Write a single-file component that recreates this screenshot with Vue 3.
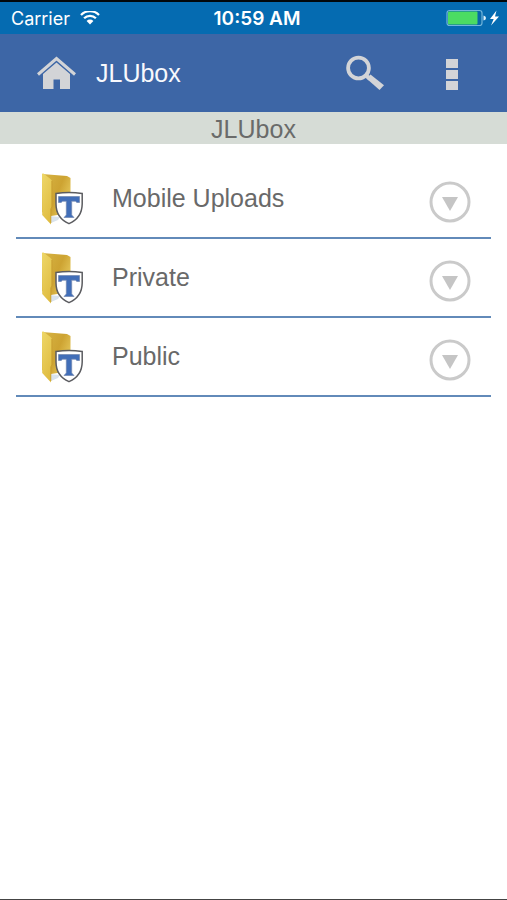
<script setup>
const folders = ['Mobile Uploads', 'Private', 'Public']
</script>

<template>
  <div class="screen">
    <div class="status">
      <div class="carrier">
        <span>Carrier</span>
        <svg width="20" height="15" viewBox="0 0 20 15" aria-hidden="true">
          <g fill="none" stroke="#fff" stroke-width="2.3">
            <path d="M1 4A12.6 12.6 0 0 1 19 4" />
            <path d="M4.1 7.3A8.3 8.3 0 0 1 15.9 7.3" />
          </g>
          <path d="M6.6 10A4.8 4.8 0 0 1 13.4 10L10 13.5Z" fill="#fff" />
        </svg>
      </div>
      <div class="time">10:59 AM</div>
      <div class="power">
        <svg width="54" height="18" viewBox="0 0 54 18" aria-hidden="true">
          <rect x="2" y="1.5" width="35" height="15" rx="2.5" fill="#0768a8" stroke="#72b5db" stroke-width="1.2" />
          <rect x="3" y="2.5" width="29.5" height="13" rx="1" fill="#4bdc62" />
          <path d="M38.5 6.5Q41 7 41 9T38.5 11.5Z" fill="#dff1fa" />
          <path d="M51.5 1.5L45 10H48.7L46 16.5L54 7.5H50Z" fill="#fff" />
        </svg>
      </div>
    </div>

    <header class="bar">
      <button class="icon-button" type="button" aria-label="Home">
        <svg width="40" height="34" viewBox="0 0 40 34" aria-hidden="true">
          <path d="M2 18.5L20.5 2.5L39 18.5" fill="none" stroke="#d3d4d7" stroke-width="3" />
          <path d="M20.5 6.4L34 18V33H24V23.5H17.5V33H7V18Z" fill="#d3d4d7" />
        </svg>
      </button>
      <h1>JLUbox</h1>
      <button class="icon-button search" type="button" aria-label="Search">
        <svg width="40" height="36" viewBox="0 0 40 36" aria-hidden="true">
          <circle cx="13.5" cy="13" r="10.4" fill="none" stroke="#d3d4d7" stroke-width="3.8" />
          <path d="M19.5 19L25 24" stroke="#d3d4d7" stroke-width="4" />
          <path d="M25.5 19.5L39 30.2L34.5 35L21.5 23.5Z" fill="#d3d4d7" />
        </svg>
      </button>
      <button class="icon-button" type="button" aria-label="More options">
        <svg width="12" height="34" viewBox="0 0 12 34" aria-hidden="true">
          <path d="M0 3H12V12H0ZM0 14H12V23H0ZM0 25H12V34H0Z" fill="#d3d4d7" />
        </svg>
      </button>
    </header>

    <h2>JLUbox</h2>

    <ul class="list">
      <li v-for="name in folders" :key="name">
        <a class="folder" href="#">
          <svg width="42" height="52" viewBox="0 0 42 52" aria-hidden="true">
            <defs>
              <linearGradient id="folder-back" x1="0" y1="0" x2="1" y2=".6">
                <stop offset="0" stop-color="#d7b545" />
                <stop offset=".6" stop-color="#cda332" />
                <stop offset="1" stop-color="#e6c95c" />
              </linearGradient>
              <linearGradient id="folder-front" x1="0" y1="0" x2=".5" y2="1">
                <stop offset="0" stop-color="#eed768" />
                <stop offset="1" stop-color="#e0bd42" />
              </linearGradient>
            </defs>
            <path d="M8 43L19 44L17 47L10 50Z" fill="#d9e3ec" />
            <path d="M1 1L26 3L29.5 5V40L10 43L1 39Z" fill="url(#folder-back)" />
            <path d="M1 1Q1 0 2.5 .6L9.5 6Q11 7 11 9V34L10 36V51.5L1.2 42Z" fill="url(#folder-front)" />
            <path d="M10.8 8V34L9.8 36V50" fill="none" stroke="#c59b2d" stroke-width=".8" />
            <path d="M15 20.5Q28 18.5 41.2 20.5V31Q41 45 28 50.6Q15 45 15 31Z" fill="#fff" stroke="#5b5c60" stroke-width="1.5" />
            <path d="M17.5 23.5H38.5V29.5H35.7L34.7 28.2H30.7V42L33 44.5H23L25.3 42V28.2H21.3L20.3 29.5H17.5Z" fill="#416eb8" stroke="#7187af" stroke-width=".7" />
          </svg>
          <span>{{ name }}</span>
        </a>
        <button class="icon-button" type="button" :aria-label="`Actions for ${name}`">
          <svg width="42" height="42" viewBox="0 0 42 42" aria-hidden="true">
            <circle cx="21" cy="21" r="19" fill="none" stroke="#cacaca" stroke-width="3" />
            <path d="M13 16H29L21 30Z" fill="#c5c5c5" />
          </svg>
        </button>
      </li>
    </ul>
  </div>
</template>

<style>
body {
  margin: 0;
  background: #fff;
}
</style>

<style scoped>
.screen {
  box-sizing: border-box;
  min-height: 100vh;
  border-top: 2px solid #02070b;
  border-bottom: 1px solid #444;
  font-family: "Liberation Sans", Arial, sans-serif;
  font-size: 25px;
}

.status {
  display: grid;
  grid-template-columns: 1fr auto 1fr;
  align-items: center;
  height: 32px;
  padding: 0 8px 0 11px;
  background: #056bb1;
  color: #fff;
  font-family: Inter, sans-serif;
  font-size: 18px;
}

.carrier {
  display: flex;
  align-items: center;
  gap: 10px;
}

.time {
  padding-left: 4px;
  font-size: 19px;
  font-weight: 600;
}

.power {
  display: flex;
  justify-content: flex-end;
}

.bar {
  display: flex;
  align-items: center;
  box-sizing: border-box;
  height: 78px;
  padding: 0 49px 0 36px;
  background: #3d66a6;
}

.icon-button {
  display: flex;
  padding: 0;
  border: 0;
  background: none;
  cursor: pointer;
}

h1,
h2 {
  margin: 0;
  font-size: 25px;
  font-weight: 400;
}

h1 {
  flex: 1;
  padding-left: 20px;
  color: #f8f9fd;
}

.search {
  margin-right: 61px;
}

h2 {
  height: 32px;
  background: #d6dcd6;
  color: #6a6b6a;
  line-height: 34px;
  text-align: center;
}

.list {
  margin: 0;
  padding: 16px 16px 0;
  list-style: none;
}

li {
  display: flex;
  align-items: center;
  box-sizing: border-box;
  height: 79px;
  padding: 0 20px 0 25px;
  border-bottom: 2px solid #628ab9;
}

.folder {
  display: flex;
  flex: 1;
  align-items: center;
  gap: 29px;
  color: #696969;
  text-decoration: none;
}

li .icon-button {
  padding-top: 7px;
}
</style>
